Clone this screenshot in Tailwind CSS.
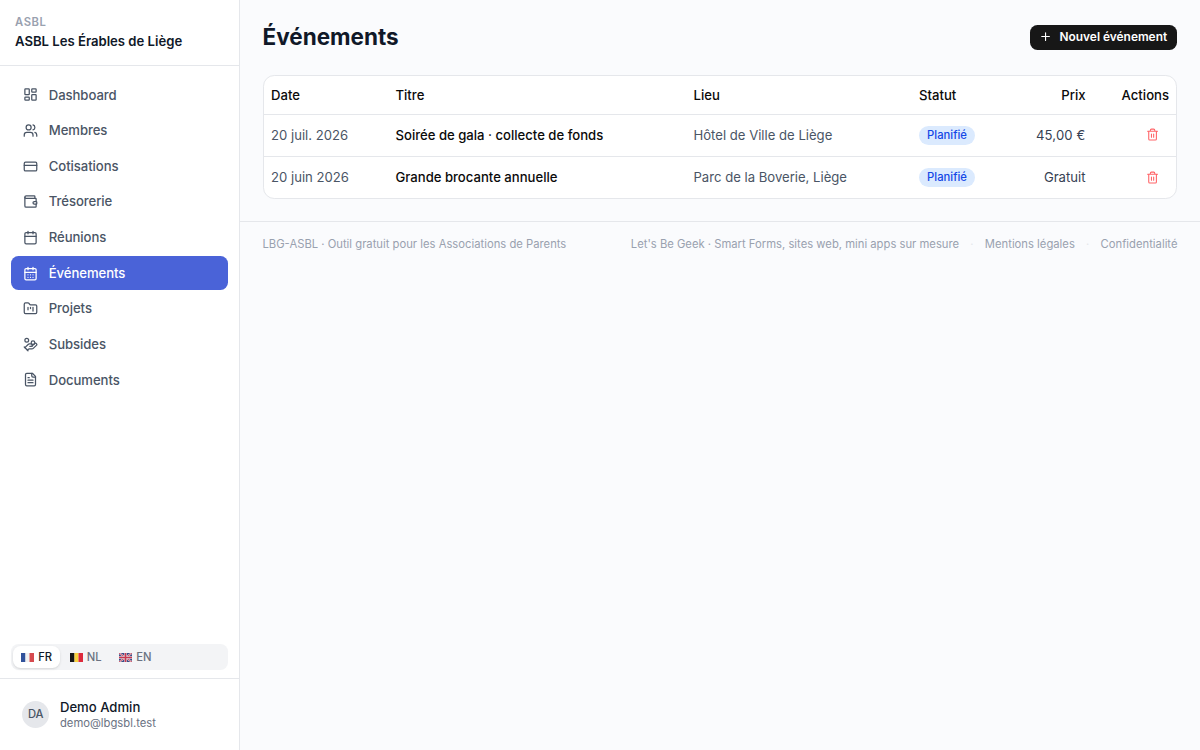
<!DOCTYPE html>
<html lang="fr" class="text-[15px]">
<head>
<meta charset="utf-8">
<title>Événements</title>
<script src="https://cdn.jsdelivr.net/npm/@tailwindcss/browser@4"></script>
</head>
<body class="flex h-screen overflow-hidden bg-[#fafbfd] font-['Inter',sans-serif] text-sm text-[#0a0a0a] antialiased">
<aside class="flex h-full w-[240px] shrink-0 flex-col border-r border-gray-200 bg-white">
  <div class="border-b border-gray-200 px-4 pt-4 pb-[14.4px]">
    <p class="text-xs font-semibold tracking-wider text-gray-400">ASBL</p>
    <p class="mt-0.5 text-sm font-semibold text-gray-900">ASBL Les Érables de Liège</p>
  </div>
  <nav class="flex flex-1 flex-col gap-0.5 px-[11px] pt-[12px] pb-3 font-medium tracking-[-0.06px] text-gray-600 [&_svg]:size-4 [&_svg]:shrink-0 [&_svg]:fill-none [&_svg]:stroke-current [&_svg]:stroke-2">
    <a class="flex items-center gap-3 rounded-lg px-[11.5px] py-2"><svg viewBox="0 0 24 24" stroke-linecap="round" stroke-linejoin="round"><rect width="7" height="9" x="3" y="3" rx="1"/><rect width="7" height="5" x="14" y="3" rx="1"/><rect width="7" height="9" x="14" y="12" rx="1"/><rect width="7" height="5" x="3" y="16" rx="1"/></svg>Dashboard</a>
    <a class="flex items-center gap-3 rounded-lg px-[11.5px] py-2"><svg viewBox="0 0 24 24" stroke-linecap="round" stroke-linejoin="round"><path d="M16 21v-2a4 4 0 0 0-4-4H6a4 4 0 0 0-4 4v2"/><path d="M16 3.128a4 4 0 0 1 0 7.744"/><path d="M22 21v-2a4 4 0 0 0-3-3.87"/><circle cx="9" cy="7" r="4"/></svg>Membres</a>
    <a class="flex items-center gap-3 rounded-lg px-[11.5px] py-2"><svg viewBox="0 0 24 24" stroke-linecap="round" stroke-linejoin="round"><rect width="20" height="14" x="2" y="5" rx="2"/><path d="M2 10h20"/></svg>Cotisations</a>
    <a class="flex items-center gap-3 rounded-lg px-[11.5px] py-2"><svg viewBox="0 0 24 24" stroke-linecap="round" stroke-linejoin="round"><path d="M19 7V4a1 1 0 0 0-1-1H5a2 2 0 0 0 0 4h15a1 1 0 0 1 1 1v4h-3a2 2 0 0 0 0 4h3a1 1 0 0 0 1-1v-2a1 1 0 0 0-1-1"/><path d="M3 5v14a2 2 0 0 0 2 2h15a1 1 0 0 0 1-1v-4"/></svg>Trésorerie</a>
    <a class="flex items-center gap-3 rounded-lg px-[11.5px] py-2"><svg viewBox="0 0 24 24" stroke-linecap="round" stroke-linejoin="round"><path d="M8 2v4M16 2v4"/><rect width="18" height="18" x="3" y="4" rx="2"/><path d="M3 10h18"/></svg>Réunions</a>
    <a class="flex items-center gap-3 rounded-lg bg-[#4a63d8] px-[11.5px] py-2 text-white"><svg viewBox="0 0 24 24" stroke-linecap="round" stroke-linejoin="round"><path d="M8 2v4M16 2v4"/><rect width="18" height="18" x="3" y="4" rx="2"/><path d="M3 10h18M8 14h.01M12 14h.01M16 14h.01M8 18h.01M12 18h.01M16 18h.01"/></svg>Événements</a>
    <a class="flex items-center gap-3 rounded-lg px-[11.5px] py-2"><svg viewBox="0 0 24 24" stroke-linecap="round" stroke-linejoin="round"><path d="M4 20h16a2 2 0 0 0 2-2V8a2 2 0 0 0-2-2h-7.93a2 2 0 0 1-1.66-.9l-.82-1.2A2 2 0 0 0 7.93 3H4a2 2 0 0 0-2 2v13c0 1.1.9 2 2 2Z"/><path d="M8 10v4M12 10v2M16 10v6"/></svg>Projets</a>
    <a class="flex items-center gap-3 rounded-lg px-[11.5px] py-2"><svg viewBox="0 0 24 24" stroke-linecap="round" stroke-linejoin="round"><path d="M11 15h2a2 2 0 1 0 0-4h-3c-.6 0-1.1.2-1.4.6L3 17"/><path d="m7 21 1.6-1.4c.3-.4.8-.6 1.4-.6h4c1.1 0 2.1-.4 2.8-1.2l4.6-4.4a2 2 0 0 0-2.75-2.91l-4.2 3.9"/><path d="m2 16 6 6"/><circle cx="16" cy="9" r="2.9"/><circle cx="6" cy="5" r="3"/></svg>Subsides</a>
    <a class="flex items-center gap-3 rounded-lg px-[11.5px] py-2"><svg viewBox="0 0 24 24" stroke-linecap="round" stroke-linejoin="round"><path d="M15 2H6a2 2 0 0 0-2 2v16a2 2 0 0 0 2 2h12a2 2 0 0 0 2-2V7Z"/><path d="M14 2v4a2 2 0 0 0 2 2h4M10 9H8M16 13H8M16 17H8"/></svg>Documents</a>
  </nav>
  <div class="px-[11px] pb-2">
    <div class="flex rounded-lg bg-gray-100 p-0.5 text-xs font-medium text-gray-500 [&_svg]:h-[9px] [&_svg]:w-[13px]">
      <span class="flex items-center gap-1 rounded-lg bg-white py-1 pr-2 pl-[8.5px] text-gray-900 shadow-sm"><svg viewBox="0 0 13 9"><path fill="#31529b" d="M0 0h4.5v9H0z"/><path fill="#f1f1f1" d="M4.5 0h4v9h-4z"/><path fill="#d64a4f" d="M8.5 0H13v9H8.5z"/></svg>FR</span>
      <span class="ml-0.5 flex items-center gap-1 py-1 pr-2 pl-[8.5px]"><svg viewBox="0 0 13 9"><path fill="#161616" d="M0 0h4.5v9H0z"/><path fill="#f8d23c" d="M4.5 0h4v9h-4z"/><path fill="#dd2a3c" d="M8.5 0H13v9H8.5z"/></svg>NL</span>
      <span class="ml-0.5 flex items-center gap-1 py-1 pr-2 pl-[8.5px]"><svg viewBox="0 0 13 9"><path fill="#3c4b86" d="M0 0h13v9H0z"/><path stroke="#eee" stroke-width="1.8" d="m0 0 13 9M13 0 0 9"/><path stroke="#c8384f" stroke-width=".9" d="m0 0 13 9M13 0 0 9"/><path stroke="#eee" stroke-width="2.4" d="M6.5 0v9M0 4.5h13"/><path stroke="#c8384f" stroke-width="1.6" d="M6.5 0v9M0 4.5h13"/></svg>EN</span>
    </div>
  </div>
  <div class="border-t border-gray-200 px-[11px] py-3">
    <div class="flex items-center gap-[10.7px] px-3 py-2">
      <span class="flex size-[27px] items-center justify-center rounded-full bg-gray-200 text-xs font-medium text-gray-600">DA</span>
      <div><p class="text-sm font-medium text-gray-900">Demo Admin</p><p class="text-xs text-gray-500">demo@lbgsbl.test</p></div>
    </div>
  </div>
</aside>
<div class="min-w-0 flex-1">
  <main class="px-6 pt-[22px] pb-[22px]">
    <div class="mb-[23px] flex h-[30px] items-center justify-between pr-px">
      <h1 class="text-2xl font-bold text-gray-900">Événements</h1>
      <button class="flex h-[25px] items-center gap-1.5 rounded-lg bg-[#171717] px-2.5 pb-px text-[11.9px] font-semibold text-white"><svg class="mt-px mr-0.5 size-3.5" viewBox="0 0 24 24" fill="none" stroke="currentColor" stroke-width="2" stroke-linecap="round"><path d="M5 12h14M12 5v14"/></svg>Nouvel événement</button>
    </div>
    <div class="mr-[.5px] overflow-hidden rounded-xl border border-gray-200 bg-white">
      <table class="w-full table-fixed border-collapse text-left text-gray-600">
        <colgroup><col class="w-[124.5px]"><col class="w-[298px]"><col class="w-[225.5px]"><col class="w-[90px]"><col class="w-[91.5px]"><col></colgroup>
        <thead class="text-[#0a0a0a]"><tr class="h-[38px] border-b border-gray-200 [&>th]:px-2 [&>th]:pt-px [&>th]:font-medium"><th>Date</th><th>Titre</th><th>Lieu</th><th>Statut</th><th class="text-right">Prix</th><th><div class="-mr-[.5px] text-right">Actions</div></th></tr></thead>
        <tbody>
          <tr class="h-[42px] border-b border-gray-200 [&>td]:px-2"><td>20 juil. 2026</td><td class="font-medium text-[#0a0a0a]">Soirée de gala · collecte de fonds</td><td>Hôtel de Ville de Liège</td><td><span class="flex h-[19px] w-[56px] items-center justify-center rounded-full bg-blue-100 text-xs font-medium text-blue-700">Planifié</span></td><td class="text-right tracking-[0.15px] text-gray-700">45,00 €</td><td><svg class="mr-[9.5px] ml-auto size-3.5 text-red-400" viewBox="0 0 24 24" fill="none" stroke="currentColor" stroke-width="2" stroke-linecap="round" stroke-linejoin="round"><path d="M10 11v6M14 11v6M19 6v14a2 2 0 0 1-2 2H7a2 2 0 0 1-2-2V6M3 6h18M8 6V4a2 2 0 0 1 2-2h4a2 2 0 0 1 2 2v2"/></svg></td></tr>
          <tr class="h-[42px] [&>td]:px-2"><td>20 juin 2026</td><td class="font-medium text-[#0a0a0a]">Grande brocante annuelle</td><td>Parc de la Boverie, Liège</td><td><span class="flex h-[19px] w-[56px] items-center justify-center rounded-full bg-blue-100 text-xs font-medium text-blue-700">Planifié</span></td><td class="text-right text-gray-700">Gratuit</td><td><svg class="mr-[9.5px] ml-auto size-3.5 text-red-400" viewBox="0 0 24 24" fill="none" stroke="currentColor" stroke-width="2" stroke-linecap="round" stroke-linejoin="round"><path d="M10 11v6M14 11v6M19 6v14a2 2 0 0 1-2 2H7a2 2 0 0 1-2-2V6M3 6h18M8 6V4a2 2 0 0 1 2-2h4a2 2 0 0 1 2 2v2"/></svg></td></tr>
        </tbody>
      </table>
    </div>
  </main>
  <footer class="flex items-center justify-between border-t border-gray-200 px-6 py-4 text-xs text-gray-400">
    <span>LBG-ASBL · Outil gratuit pour les Associations de Parents</span>
    <div class="flex gap-3"><span>Let's Be Geek · Smart Forms, sites web, mini apps sur mesure</span><span class="text-gray-200">·</span><span>Mentions légales</span><span class="text-gray-200">·</span><span>Confidentialité</span></div>
  </footer>
</div>
</body>
</html>
